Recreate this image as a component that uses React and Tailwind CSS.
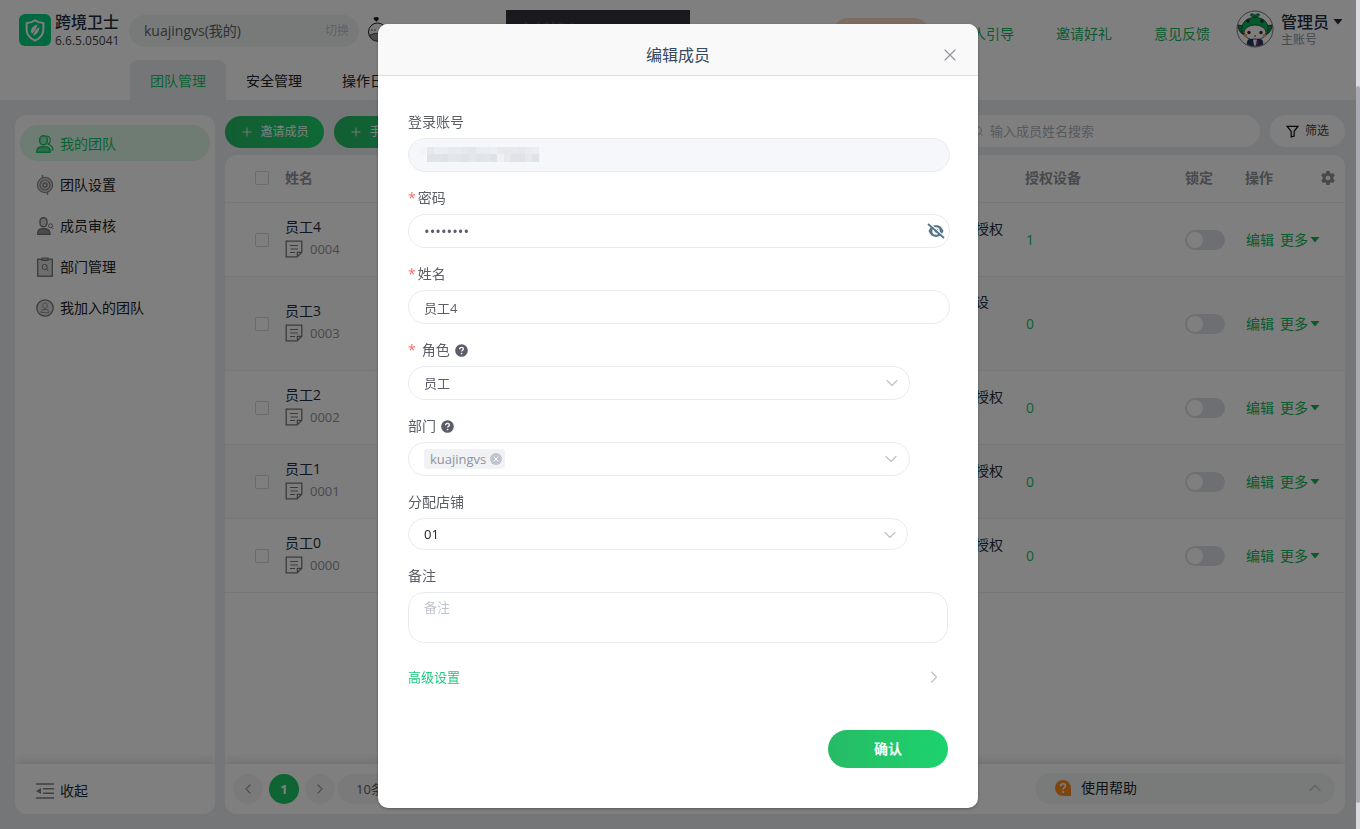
import React from "react";
import { ChevronDown, ChevronLeft, ChevronRight, ChevronUp, Plus, Search, X } from "lucide-react";

const members = [
  { name: "员工4", id: "0004", devices: 1, perms: ["环境管理店铺管理成员授权", "设备管理"] },
  { name: "员工3", id: "0003", devices: 0, perms: ["环境管理店铺管理成员设", "备管理访问策略", "授权"] },
  { name: "员工2", id: "0002", devices: 0, perms: ["环境管理店铺管理成员授权", "设备管理"] },
  { name: "员工1", id: "0001", devices: 0, perms: ["环境管理店铺管理成员授权", "设备管理"] },
  { name: "员工0", id: "0000", devices: 0, perms: ["环境管理店铺管理成员授权", "设备管理"] },
];

function Logo() {
  return (
    <svg viewBox="0 0 32 32" className="size-8 shrink-0" aria-hidden="true">
      <rect width="32" height="32" rx="6" fill="#00d280" />
      <path d="M16 6.2c2.4 1.8 5.2 2.7 8.4 2.8v6.4c0 5-3.2 8.700-8.400 11.200-5.200-2.500-8.400-6.200-8.400-11.200V9c3.200-.1 6-1 8.400-2.800Z" fill="none" stroke="#fff" strokeWidth="2" strokeLinejoin="round" />
      <path d="M18.500 10.500c-4.200 1.200-6.800 3.800-6.500 7.600l1 1.600c2.600-2.200 4.600-5.200 5.500-9.200ZM20.300 13.200c.3 4-2.300 7.200-6.300 8.600 1-3.800 3.200-6.700 6.300-8.600Z" fill="#fff" />
    </svg>
  );
}

function Mascot() {
  return (
    <svg viewBox="0 0 26 28" className="h-7 w-[26px] shrink-0" aria-hidden="true">
      <path d="M9.500 5.800 6.800 3.200C6 1.800 7.600.4 9 1.600c1.200-1.200 3.400 0 2.500 1.800Z" fill="#111" />
      <circle cx="10.500" cy="16" r="9" fill="#f4f4f4" stroke="#222" strokeWidth="1" />
      <path d="M2.500 19.500c4-3 12-3 16 0-1.200 4-4.500 5.500-8 5.500s-6.800-1.500-8-5.500Z" fill="#999" stroke="#333" strokeWidth=".8" />
      <circle cx="5" cy="14" r=".7" fill="#222" />
      <circle cx="8" cy="14" r=".7" fill="#222" />
    </svg>
  );
}

function Avatar() {
  return (
    <svg viewBox="0 0 38 38" className="size-[38px] shrink-0" aria-hidden="true">
      <circle cx="19" cy="19" r="18" fill="#fff" stroke="#777" strokeWidth="1" />
      <path d="M2 15l6 1-1 8c-3-1-5-5-5-9ZM36 15l-6 1 1 8c3-1 5-5 5-9Z" fill="#06a04c" stroke="#222" strokeWidth=".8" />
      <path d="M6 21C5 12 11 7.500 19 7.500S33 12 32 21c-1 5-4 7-13 7S7 26 6 21Z" fill="#0cb457" stroke="#0a4426" strokeWidth=".8" />
      <ellipse cx="19" cy="22.500" rx="11" ry="7.500" fill="#fff" stroke="#222" strokeWidth=".7" />
      <path d="M17 7c-4-1-3-4 0-3l2 1 2-1c3-1 4 2 0 3Z" fill="#12a652" stroke="#134" strokeWidth=".5" />
      <circle cx="12" cy="11" r="1.800" fill="#123b2a" />
      <circle cx="26" cy="11" r="1.800" fill="#123b2a" />
      <circle cx="13" cy="22.500" r="1.700" fill="#4a2020" />
      <circle cx="25" cy="22.500" r="1.700" fill="#4a2020" />
      <circle cx="9.500" cy="25.500" r="1.700" fill="#f2a25c" />
      <circle cx="28.500" cy="25.500" r="1.700" fill="#f2a25c" />
      <path d="M18 26h2" stroke="#333" />
      <path d="M12 30c3-1.500 11-1.500 14 0l1 4c-4 2.500-12 2.500-16 0Z" fill="#1d3a66" stroke="#112" strokeWidth=".6" />
      <path d="M17 29.500h4l-1 6h-2Z" fill="#fff" />
      <path d="M20 31l3-1v4l-2 1Z" fill="#f0a" opacity=".5" />
    </svg>
  );
}

const sideIcon = "size-[18px] shrink-0";

function TeamIcon() {
  return (
    <svg viewBox="0 0 18 18" className={sideIcon} fill="none" stroke="#14c464" strokeWidth="1.400" aria-hidden="true">
      <path d="M10.500 1.200c5 .2 4.500 7.300 1 7.800 2.500.8 5.500 2 5.500 6h-2.500" strokeWidth="1.200" />
      <rect x="3.700" y=".8" width="7.600" height="9" rx="3.800" fill="#9be8bd" />
      <path d="M.8 17.200c0-3.800 2.400-5.400 5-5.400h3.400c2.600 0 5 1.600 5 5.400Z" fill="#14c464" fillOpacity=".6" />
    </svg>
  );
}
function SettingIcon() {
  return (
    <svg viewBox="0 0 18 20" className="h-5 w-[18px] shrink-0" fill="none" stroke="#8a8a8a" aria-hidden="true">
      <circle cx="9" cy="10" r="7.600" fill="#d6d6d6" strokeWidth="1.200" />
      <path d="M6.500 0v3M11.500 17v3" strokeWidth="1.300" />
      <circle cx="9" cy="10" r="5" strokeWidth="1.200" />
      <circle cx="9" cy="10" r="2" strokeWidth="1.500" />
    </svg>
  );
}
function ReviewIcon() {
  return (
    <svg viewBox="0 0 18 18" className={sideIcon} fill="none" stroke="#777" strokeWidth="1.400" aria-hidden="true">
      <rect x="4" y=".8" width="7" height="9" rx="3.500" fill="#d6d6d6" />
      <path d="M1.700 17.200c0-3.800 2-5.400 4.300-5.400h3c2.600 0 5 1.600 5 5.400Z" fill="#999" />
      <circle cx="14.500" cy="8.800" r="2" strokeWidth="1" />
      <path d="m16 10.500 1.500 1.500" strokeWidth="1" />
    </svg>
  );
}
function DeptIcon() {
  return (
    <svg viewBox="0 0 18 20" className="h-5 w-[18px] shrink-0" fill="none" stroke="#777" aria-hidden="true">
      <rect x="1.700" y="2.200" width="14.600" height="17" fill="#dcdcdc" strokeWidth="1.300" />
      <path d="M6 3.500V1h6v2.500Z" fill="#aaa" strokeWidth="1.200" />
      <circle cx="8.700" cy="10" r="2.600" />
      <path d="m10.500 12 1.800 2" />
    </svg>
  );
}
function JoinedIcon() {
  return (
    <svg viewBox="0 0 18 18" className={sideIcon} fill="none" stroke="#777" aria-hidden="true">
      <circle cx="9" cy="9" r="8.200" fill="#dcdcdc" strokeWidth="1.300" />
      <rect x="6.700" y="4" width="4.600" height="5.400" rx="2.300" stroke="#999" />
      <path d="M5 13.500c0-2 1.500-3 3-3h2c1.500 0 3 1 3 3Z" stroke="#999" />
    </svg>
  );
}
function NoteIcon() {
  return (
    <svg viewBox="0 0 18 18" className="size-[18px] shrink-0" fill="none" stroke="#777" aria-hidden="true">
      <path d="M1.200 1.200h15.600v11l-4.600 4.600h-11Z" strokeWidth="1.300" />
      <path d="M16.500 12.300h-4.200v4.200M5 5.500h8M5.500 9h7.500M5 12.500h5" strokeWidth="1.200" />
    </svg>
  );
}
function FoldIcon() {
  return (
    <svg viewBox="0 0 18 18" className={sideIcon} fill="none" stroke="#808080" strokeWidth="1.500" aria-hidden="true">
      <path d="M0 2h18M7 6.700h11M7 11.300h11M0 16h18" />
      <path d="M0 9l5-3v6Z" fill="#808080" stroke="none" />
    </svg>
  );
}
function Gear() {
  return (
    <svg viewBox="0 0 24 24" className="size-4" fill="#909399" aria-hidden="true">
      <path fillRule="evenodd" d="M9.600 1.500h4.800l.6 3 1.800 1 2.900-1 2.400 4.200-2.300 2v2.600l2.300 2-2.400 4.200-2.900-1-1.800 1-.6 3H9.600l-.6-3-1.800-1-2.900 1-2.400-4.200 2.300-2v-2.600l-2.300-2 2.400-4.200 2.900 1 1.800-1ZM12 8.500a3.500 3.500 0 1 0 0 7 3.500 3.500 0 0 0 0-7Z" />
    </svg>
  );
}
function Caret({ className }) {
  return (
    <svg viewBox="0 0 10 6" className={className} fill="currentColor" aria-hidden="true">
      <path d="M.5 0h9L5 5.500Z" />
    </svg>
  );
}
function Help() {
  return (
    <svg viewBox="0 0 14 14" className="size-[13px] shrink-0" aria-hidden="true">
      <circle cx="7" cy="7" r="6.800" fill="#5b5e66" />
      <path d="M5 5.600C5 4.300 5.900 3.600 7 3.600s2 .7 2 1.800c0 1.300-1.900 1.300-1.900 2.700" fill="none" stroke="#fff" strokeWidth="1.400" />
      <circle cx="7.100" cy="10.200" r=".9" fill="#fff" />
    </svg>
  );
}
function EyeOff() {
  return (
    <svg viewBox="0 0 18 16" className="h-4 w-[18px]" aria-hidden="true">
      <path d="M1.500 8C3 4.200 5.700 2 9 2s6 2.200 7.500 6c-1.500 3.800-4.200 6-7.500 6S3 11.800 1.500 8Z" fill="#56758c" />
      <circle cx="9" cy="8" r="3.700" fill="#fff" />
      <circle cx="9.500" cy="7.700" r="2" fill="#56758c" />
      <path d="M2.500.2 17.500 14" stroke="#fff" strokeWidth="1.500" />
      <path d="M1 1l16 14" stroke="#56758c" strokeWidth="1.700" />
    </svg>
  );
}
function Mosaic() {
  const top = ["#f2f4f8", "#e6e8ec", "#eceef2", "#ebedf0", "#e8eaee", "#e9ebef", "#e6e8ec", "#e4e6ea", "#e9edf0", "#e8edf0", "#eceef1", "#e8e9ed", "#e5e7eb", "#e7e9ed", "#e5e7eb", "#e9ebef", "#ebedf0"];
  const low = ["#f5f7fb", "#dfe2e7", "#e0e3e8", "#dee1e6", "#e3e6ea", "#e2e5ea", "#dfe2e7", "#e3e6ea", "#e0e3e8", "#e2e5e9", "#dfe2e7", "#eef0f3", "#e7e9ed", "#dfe2e7", "#e0e2e7", "#e5e8ec", "#dfe2e7"];
  return (
    <svg viewBox="0 0 120 16" className="pointer-events-none absolute left-3 top-[9px] h-4 w-[120px]" aria-hidden="true">
      {top.map((c, i) => <rect key={i} x={i * 7} width="7.200" height="8" fill={c} />)}
      {low.map((c, i) => <rect key={i} x={i * 7} y="7" width="7.200" height="8" fill={c} />)}
    </svg>
  );
}

function SideItem({ icon, active, children }) {
  return (
    <a href="#" className={active ? "flex h-9 items-center gap-[6px] rounded-full bg-[#dcf8e8] pl-4 pt-0.5 text-[#14c464]" : "flex h-9 items-center gap-[6px] rounded-full pl-4 pt-0.5 text-[#222]"}>
      {icon}
      <span>{children}</span>
    </a>
  );
}

const label = "flex h-8 items-center text-sm text-[#5b5e66]";
const field = "block h-[34px] w-full rounded-full border border-[#e9eaee] bg-white px-[15px] text-[#5b5e66] outline-none";
const selectArrow = "pointer-events-none absolute right-2 top-[7px] size-5 text-[#c0c4cc]";

function Star() {
  return <span className="mr-0.5 text-[#f56c6c]">*</span>;
}

function Dialog() {
  return (
    <div className="fixed inset-0 overflow-hidden bg-black/50 pr-1 pt-6">
      <div role="dialog" aria-modal="true" aria-labelledby="dlg-title" className="mx-auto w-[600px] max-w-full overflow-hidden rounded-[10px] bg-white shadow-[0_1px_3px_rgba(0,0,0,0.3)]">
        <header className="grid h-[52px] grid-cols-[40px_1fr_40px] items-center border-b border-[#dcdfe6] bg-[#f9f9fa] px-2 pt-2.5">
          <span />
          <h2 id="dlg-title" className="text-center text-base text-[#34495e]">编辑成员</h2>
          <button type="button" aria-label="关闭" className="flex justify-center text-[#909399]">
            <X className="size-5" strokeWidth={1.3} />
          </button>
        </header>
        <form className="px-[30px] pb-10 pt-[30px]" onSubmit={(e) => e.preventDefault()}>
          <div className="mr-[-2px] flex flex-col gap-2.5">
            <div>
              <label htmlFor="account" className={label}>登录账号</label>
              <div className="relative">
                <input id="account" disabled className="block h-[34px] w-full rounded-full border border-[#e9ebf0] bg-[#f5f7fb]" />
                <Mosaic />
              </div>
            </div>
            <div>
              <label htmlFor="pwd" className={label}><Star />密码</label>
              <div className="relative">
                <input id="pwd" type="password" defaultValue="12345678" className={field + " text-[15px]"} />
                <button type="button" aria-label="显示密码" className="absolute right-[5px] top-[9px]"><EyeOff /></button>
              </div>
            </div>
            <div>
              <label htmlFor="name" className={label}><Star />姓名</label>
              <input id="name" type="text" defaultValue="员工4" className={field + " text-[13px]"} />
            </div>
            <div>
              <label htmlFor="role" className={label}><Star /><span className="ml-1 mr-[5px]">角色</span><Help /></label>
              <div className="relative mr-10">
                <select id="role" className={field + " appearance-none text-[13px]"}><option>员工</option></select>
                <ChevronDown className={selectArrow} strokeWidth={1.5} />
              </div>
            </div>
            <div>
              <label htmlFor="dept" className={label}><span className="mr-[5px]">部门</span><Help /></label>
              <div className="mr-10 flex h-[34px] items-center rounded-full border border-[#e9eaee] pl-[15px] pr-2">
                <span className="flex h-5 items-center gap-1 rounded-[3px] bg-[#f0f2f5] pl-1.5 pr-[3px] text-[13px] text-[#909399]">
                  kuajingvs
                  <button type="button" aria-label="移除 kuajingvs" className="flex size-3 items-center justify-center rounded-full bg-[#c0c4cc] text-white">
                    <X className="size-2" strokeWidth={3} />
                  </button>
                </span>
                <input id="dept" type="text" role="combobox" aria-expanded="false" className="min-w-0 flex-1 bg-transparent outline-none" />
                <ChevronDown className="size-5 text-[#c0c4cc]" strokeWidth={1.5} />
              </div>
            </div>
            <div>
              <label htmlFor="shop" className={label}>分配店铺</label>
              <div className="relative mr-[42px]">
                <select id="shop" className="block h-8 w-full appearance-none rounded-full border border-[#e9eaee] bg-white px-[15px] text-[13px] text-[#222] outline-none"><option>01</option></select>
                <ChevronDown className={selectArrow} strokeWidth={1.5} />
              </div>
            </div>
            <div className="mr-[2px]">
              <label htmlFor="memo" className={label}>备注</label>
              <textarea id="memo" placeholder="备注" className="block h-[51px] w-full resize-none rounded-2xl border border-[#e9eaee] px-[15px] py-1 text-[13px] leading-5 outline-none placeholder:text-[#c0c4cc]" />
            </div>
          </div>
          <button type="button" className="mt-6 flex h-5 w-full items-center justify-between pr-1 text-[13px] text-[#1fc97f]">
            高级设置
            <ChevronRight className="size-5 text-[#c0c4cc]" strokeWidth={1.5} />
          </button>
          <div className="mt-[43px] flex justify-end">
            <button type="submit" className="h-[38px] w-[120px] rounded-full bg-linear-to-r from-[#26bb65] to-[#1cd36e] text-sm font-bold text-white">确认</button>
          </div>
        </form>
      </div>
    </div>
  );
}

export default function App() {
  const box = "block size-3.5 appearance-none rounded-[2px] border border-[#d4d6dc] bg-white";
  const page = "flex size-[30px] items-center justify-center rounded-full";
  return (
    <div className="font-['Open_Sans','Noto_Sans_CJK_SC',sans-serif] flex min-h-screen flex-col bg-[#ebedf0] text-sm leading-5">
      <header className="flex h-[100px] justify-between overflow-hidden bg-white">
        <div className="flex flex-col justify-between">
          <div className="flex items-start pl-[19px] pt-3.5">
            <Logo />
            <div className="ml-1 w-[74px] shrink-0">
              <div className="text-base font-medium leading-[17px] text-[#222d3d]">跨境卫士</div>
              <div className="text-xs leading-5 text-[#444]">6.6.5.05041</div>
            </div>
            <button type="button" className="mt-px flex h-8 w-[230px] shrink-0 items-center justify-between rounded-full bg-[#f0f4f4] pl-[15px] pr-2.5 text-[#606266]">
              <span>kuajingvs(我的)</span>
              <span className="text-xs text-[#c0c4cc]">切换</span>
            </button>
            <div className="ml-2 mt-0.5 shrink-0"><Mascot /></div>
            <div className="-mt-1 ml-[113px] h-9 w-[184px] shrink-0 bg-[#32333d] pl-3 pt-2 text-base font-bold text-[#555] leading-6">
              全新接入 <span className="text-[#16a37a]">ChatGPT</span>
            </div>
          </div>
          <nav className="flex pl-[130px]">
            <a href="#" className="flex h-10 w-24 items-center justify-center rounded-t-lg bg-[#ebedf0] pt-0.5 text-[#14c464]">团队管理</a>
            <a href="#" className="flex h-10 w-24 items-center justify-center pt-0.5 text-[#222]">安全管理</a>
            <a href="#" className="flex h-10 w-24 items-center justify-center pt-0.5 text-[#222]">操作日志</a>
          </nav>
        </div>
        <div className="flex items-start pr-[17px]">
          <div className="mr-7 mt-[18px] h-8 w-[98px] rounded-full bg-[#fad9c4]" />
          <nav className="mr-[26px] mt-6 flex gap-[42px] text-[#14b45c]">
            <a href="#">新人引导</a>
            <a href="#">邀请好礼</a>
            <a href="#">意见反馈</a>
          </nav>
          <div className="mt-2.5"><Avatar /></div>
          <div className="ml-[7px] mt-3">
            <button type="button" className="flex items-center gap-1 text-base font-medium leading-5 text-[#222d3d]">
              管理员 <Caret className="h-1.5 w-2.5" />
            </button>
            <div className="text-xs leading-4 text-[#909399]">主账号</div>
          </div>
        </div>
      </header>

      <div className="flex flex-1 gap-2.5 p-[15px]">
        <aside className="flex w-[200px] shrink-0 flex-col overflow-hidden rounded-xl bg-white">
          <nav className="flex flex-1 flex-col gap-[5px] px-[5px] pt-2.5">
            <SideItem active icon={<TeamIcon />}>我的团队</SideItem>
            <SideItem icon={<SettingIcon />}>团队设置</SideItem>
            <SideItem icon={<ReviewIcon />}>成员审核</SideItem>
            <SideItem icon={<DeptIcon />}>部门管理</SideItem>
            <SideItem icon={<JoinedIcon />}>我加入的团队</SideItem>
          </nav>
          <button type="button" className="flex h-[50px] items-center gap-[6px] pl-[21px] pt-1 text-[#222d3d] shadow-[0_-2px_10px_rgba(0,0,0,0.15)]">
            <FoldIcon />收起
          </button>
        </aside>

        <main className="flex min-w-0 flex-1 flex-col">
          <div className="flex h-10 items-start justify-between">
            <div className="flex gap-2.5 pt-px text-xs text-white">
              <button type="button" className="flex h-8 w-[99px] items-center justify-center gap-1.5 rounded-full bg-linear-to-r from-[#26bb65] to-[#1cd36e]"><Plus className="size-3.5" strokeWidth={1.5} />邀请成员</button>
              <button type="button" className="flex h-8 w-[99px] items-center justify-center gap-1.5 rounded-full bg-linear-to-r from-[#26bb65] to-[#1cd36e]"><Plus className="size-3.5" strokeWidth={1.5} />手动添加</button>
            </div>
            <div className="flex gap-2.5">
              <label className="flex h-8 w-[295px] items-center gap-1.5 rounded-full bg-white pl-[7px] text-[#b0b3ba]">
                <Search className="size-3 shrink-0" />
                <input type="search" aria-label="搜索成员" placeholder="输入成员姓名搜索" className="w-full bg-transparent text-[13px] outline-none placeholder:text-[#b0b3ba]" />
              </label>
              <button type="button" className="flex h-8 w-[75px] items-center justify-center gap-1.5 rounded-full bg-white text-xs text-[#444]">
                <svg viewBox="0 0 14 14" className="size-[13px]" fill="none" stroke="#111" strokeWidth="1.300" aria-hidden="true"><path d="M1.200 1.500h11.600L8.800 6.800v5l-3.200 1V6.800Z" /></svg>
                筛选
              </button>
            </div>
          </div>

          <section className="flex flex-1 flex-col overflow-hidden rounded-xl bg-white">
            <div className="flex-1">
              <table className="w-full table-fixed border-collapse text-left">
                <colgroup>
                  <col className="w-[50px]" /><col className="w-[180px]" /><col className="w-[180px]" /><col />
                  <col className="w-[190px]" /><col className="w-[160px]" /><col className="w-[60px]" /><col className="w-[110px]" />
                </colgroup>
                <thead>
                  <tr className="h-[47px] border-b border-[#ebeef5] font-bold text-[#909399]">
                    <th className="pl-[30px]"><input type="checkbox" aria-label="全选" className={box} /></th>
                    <th className="px-2.5">姓名</th>
                    <th className="px-2.5">角色</th>
                    <th className="px-2.5">部门</th>
                    <th className="px-2.5">权限</th>
                    <th className="px-2.5">授权设备</th>
                    <th className="px-2.5">锁定</th>
                    <th className="pl-2.5 pr-[9px]"><span className="flex items-center justify-between">操作<button type="button" aria-label="列设置"><Gear /></button></span></th>
                  </tr>
                </thead>
                <tbody>
                  {members.map((m, i) => (
                    <tr key={m.id} className={(i % 2 ? "bg-[#fafafa] " : "") + (m.perms.length > 2 ? "h-[94px]" : "h-[74px]") + " border-b border-[#ebeef5] [&>td]:pt-0.5"}>
                      <td className="pl-[30px]"><input type="checkbox" aria-label={m.name} className={box} /></td>
                      <td className="px-2.5 text-[#222d3d]">
                        <div className="pb-1.5">
                          <div className="leading-6">{m.name}</div>
                          <div className="flex items-center gap-[7px] text-[13px] text-[#909399]"><NoteIcon />{m.id}</div>
                        </div>
                      </td>
                      <td className="px-2.5">员工</td>
                      <td className="px-2.5">kuajingvs</td>
                      <td className="whitespace-nowrap px-2.5 leading-[23px] text-[#222d3d]">{m.perms.map((p) => <div key={p}>{p}</div>)}</td>
                      <td className="px-[11px] text-[#14c464]">{m.devices}</td>
                      <td className="px-2.5">
                        <button type="button" role="switch" aria-checked="false" aria-label="锁定" className="flex h-5 w-10 items-center rounded-full bg-[#dcdfe6] pl-0.5">
                          <span className="size-4 rounded-full bg-white" />
                        </button>
                      </td>
                      <td className="whitespace-nowrap px-[11px] text-[#14b45c]">
                        <span className="flex items-center gap-1.5">
                          <a href="#">编辑</a>
                          <button type="button" className="flex items-center gap-0.5">更多<Caret className="h-1.5 w-2.5" /></button>
                        </span>
                      </td>
                    </tr>
                  ))}
                </tbody>
              </table>
            </div>
            <footer className="flex h-[50px] items-center justify-between pl-2 pr-2.5 shadow-[0_-2px_10px_rgba(0,0,0,0.15)]">
              <div className="flex items-center gap-[3px] text-[13px]">
                <div className="flex gap-1.5">
                  <button type="button" aria-label="上一页" className={page + " bg-[#f4f4f5] text-[#a0a3aa]"}><ChevronLeft className="size-4" /></button>
                  <button type="button" className={page + " bg-[#1cc966] font-bold text-white"}>1</button>
                  <button type="button" aria-label="下一页" className={page + " bg-[#f4f4f5] text-[#a0a3aa]"}><ChevronRight className="size-4" /></button>
                </div>
                <select aria-label="每页条数" className="h-[30px] w-[100px] appearance-none rounded-full bg-[#f4f4f5] pl-[18px] text-[#606266]"><option>10条/页</option></select>
              </div>
              <button type="button" className="mb-0.5 flex h-[31px] w-[300px] items-center rounded-full bg-[#f2f7f5] pl-5 pr-2.5 text-[#222]">
                <svg viewBox="0 0 16 16" className="mr-2.5 size-4" aria-hidden="true">
                  <path d="M8 0a8 8 0 0 1 8 8v8H8A8 8 0 0 1 8 0Z" fill="#fb8c23" />
                  <path d="M5.600 6.200c0-1.600 1.100-2.400 2.400-2.400s2.400.8 2.400 2.100c0 1.600-2.300 1.700-2.300 3.500" fill="none" stroke="#fff" strokeWidth="1.500" />
                  <circle cx="8.100" cy="11.900" r="1" fill="#fff" />
                </svg>
                使用帮助
                <ChevronUp className="ml-auto size-5 text-[#c0c4cc]" strokeWidth={1.5} />
              </button>
            </footer>
          </section>
        </main>
      </div>

      <Dialog />
      <div className="fixed inset-y-0 right-0 flex w-1 flex-col bg-[#dcdce0] pb-[26px] pt-[86px]" aria-hidden="true">
        <div className="flex-1 rounded-full bg-[#a9a9b2]" />
      </div>
    </div>
  );
}
